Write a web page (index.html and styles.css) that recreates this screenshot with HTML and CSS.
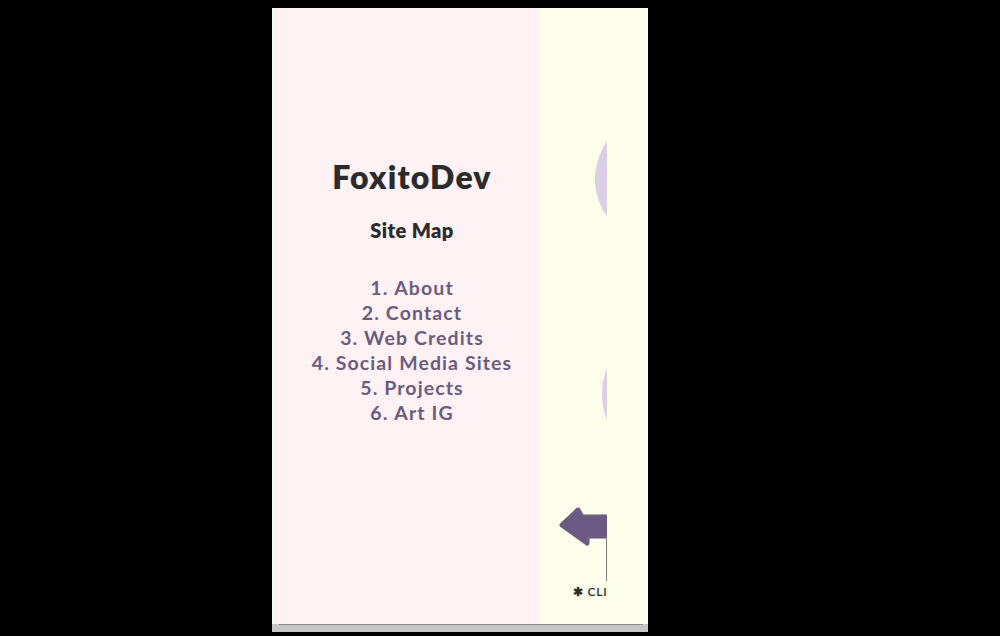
FILE: index.html
```html
<!DOCTYPE html>
<html lang="en">
<head>
<meta charset="utf-8">
<title>FoxitoDev - Site Map</title>
<link rel="stylesheet" href="styles.css">
</head>
<body>
  <div class="frame">
    <div class="screen">
      <div class="strip-left"></div>
      <section class="sitemap">
        <h1 class="brand">FoxitoDev</h1>
        <h2 class="map-title">Site Map</h2>
        <ol class="map-list">
          <li>About</li>
          <li>Contact</li>
          <li>Web Credits</li>
          <li>Social Media Sites</li>
          <li>Projects</li>
          <li>Art IG</li>
        </ol>
      </section>
      <section class="side">
        <div class="peek">
          <span class="bubble bubble-one"></span>
          <span class="bubble bubble-two"></span>
          <div class="hint">
            <svg class="arrow" width="50" height="40" viewBox="0 0 50 40" aria-hidden="true">
              <path d="M20 3 L4 18 L29 36 L29 29 L49 29 L49 10 L24 10 Z" fill="#6b5a82" stroke="#6b5a82" stroke-width="5" stroke-linejoin="round"/>
            </svg>
            <div class="hint-line"></div>
            <div class="hint-text">✱ CLI</div>
          </div>
        </div>
      </section>
      <div class="strip-right"></div>
    </div>
    <div class="bottombar"><div class="bottombar-line"></div></div>
  </div>
</body>
</html>
```

FILE: styles.css
```css
html, body {
  margin: 0;
  padding: 0;
  background: #000;
}

body {
  font-family: Lato, "Noto Sans", sans-serif;
  height: 636px;
  overflow: hidden;
}

.frame {
  width: 376px;
  margin: 8px 0 0 272px;
  display: flex;
  flex-direction: column;
}

.screen {
  height: 616px;
  display: flex;
}

.strip-left {
  width: 5px;
  background: #f4f4f4;
}

.strip-right {
  width: 5px;
  background: #fbfbf6;
}

.sitemap {
  width: 263px;
  background: #fff2f5;
  padding: 150px 0 0 7px;
  box-sizing: border-box;
  display: flex;
  flex-direction: column;
  align-items: center;
}

.brand {
  margin: 0;
  font-size: 32px;
  line-height: 38px;
  font-weight: 800;
  color: #2b2a2c;
  letter-spacing: 1.2px;
}

.map-title {
  margin: 21px 0 0;
  font-size: 20px;
  line-height: 26px;
  font-weight: 800;
  color: #2b2a2c;
  letter-spacing: 0.4px;
}

.map-list {
  margin: 32px 0 0;
  padding: 0;
  list-style: decimal inside;
  text-align: center;
  font-size: 19.5px;
  line-height: 25px;
  font-weight: 700;
  color: #6b5b7f;
  letter-spacing: 1.1px;
}

.side {
  width: 103px;
  background: #fdffeb;
}

.peek {
  position: relative;
  width: 67px;
  height: 100%;
  overflow: hidden;
  display: flex;
  flex-direction: column;
  justify-content: flex-end;
  padding: 0 0 25px 18px;
  box-sizing: border-box;
}

.bubble {
  position: absolute;
  border-radius: 50%;
  background: #d9cfe6;
}

.bubble-one {
  left: 55px;
  top: 106px;
  width: 130px;
  height: 130px;
}

.bubble-two {
  left: 62px;
  top: 316px;
  width: 140px;
  height: 140px;
}

.hint {
  width: 49px;
  display: flex;
  flex-direction: column;
}

.arrow {
  display: block;
}

.hint-line {
  width: 1px;
  height: 42px;
  margin: -8px 0 0 48px;
  background: #7a7a7a;
}

.hint-text {
  margin: 3px 0 0 15px;
  font-size: 12px;
  line-height: 15px;
  font-weight: 600;
  color: #2e2e2e;
  letter-spacing: 0.8px;
  white-space: nowrap;
}

.bottombar {
  height: 8px;
  background: #c6c6c6;
}

.bottombar-line {
  height: 1px;
  margin: 0 5px 0 7px;
  background: #8a8a8a;
}
```
